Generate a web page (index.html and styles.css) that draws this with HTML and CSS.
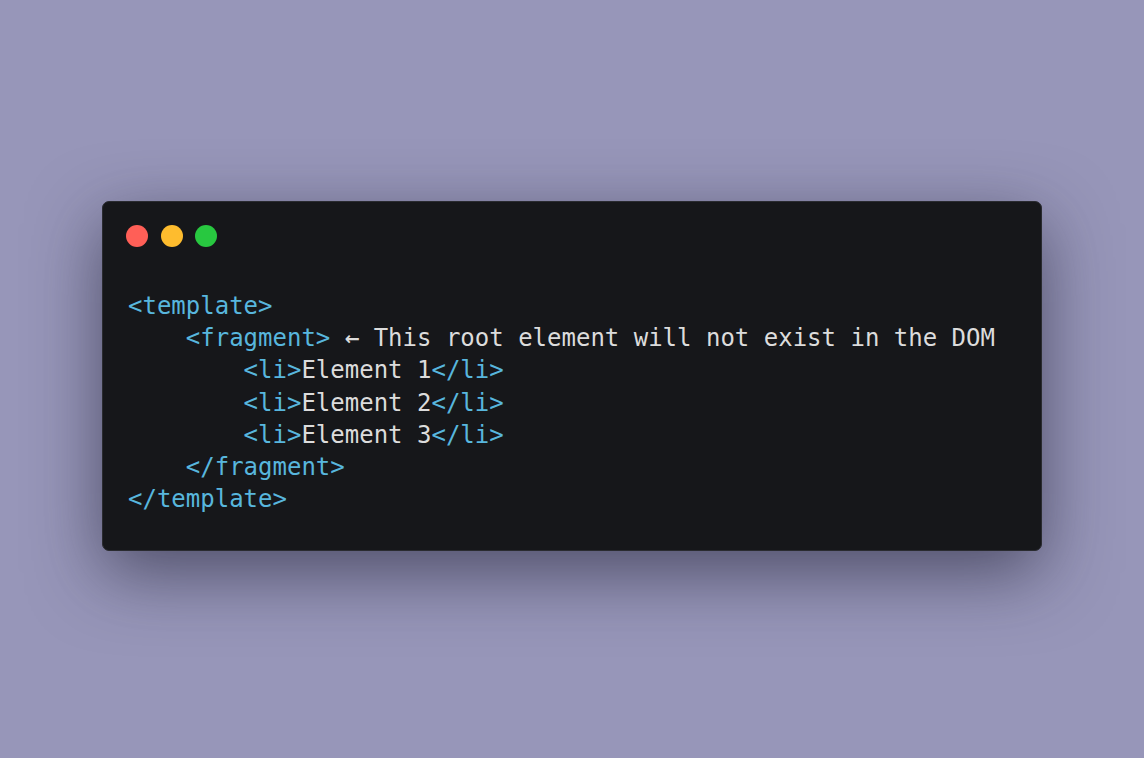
FILE: index.html
```html
<!DOCTYPE html>
<html>
<head>
<meta charset="utf-8">
<link rel="stylesheet" href="styles.css">
</head>
<body>
<div class="window">
  <div class="dots">
    <span class="dot red"></span>
    <span class="dot yellow"></span>
    <span class="dot green"></span>
  </div>
<pre class="code"><span class="tag">&lt;template&gt;</span>
    <span class="tag">&lt;fragment&gt;</span> <span class="arrow">←</span> This root element will not exist in the DOM
        <span class="tag">&lt;li&gt;</span>Element 1<span class="tag">&lt;/li&gt;</span>
        <span class="tag">&lt;li&gt;</span>Element 2<span class="tag">&lt;/li&gt;</span>
        <span class="tag">&lt;li&gt;</span>Element 3<span class="tag">&lt;/li&gt;</span>
    <span class="tag">&lt;/fragment&gt;</span>
<span class="tag">&lt;/template&gt;</span></pre>
</div>
</body>
</html>
```
FILE: styles.css
```css
html, body {
  margin: 0;
  padding: 0;
}
body {
  background: #9796b9;
  height: 758px;
  display: flex;
  align-items: center;
  justify-content: center;
  padding-bottom: 6px;
  box-sizing: border-box;
}
.window {
  width: 940px;
  height: 350px;
  box-sizing: border-box;
  background: #16171a;
  border-radius: 7px;
  border: 1px solid #2a2b30;
  box-shadow: 0 22px 70px rgba(30, 30, 50, 0.6);
  padding: 23px 24px 0 23px;
}
.dots {
  display: flex;
  gap: 12.5px;
  height: 22px;
}
.dot {
  width: 22px;
  height: 22px;
  border-radius: 50%;
}
.red { background: #ff5f57; }
.yellow { background: #febc2e; }
.green { background: #28c840; }
.code {
  margin: 43px 0 0 2px;
  font-family: "DejaVu Sans Mono", monospace;
  font-size: 24px;
  line-height: 32.2px;
  color: #dcdcdc;
  white-space: pre;
}
.tag {
  color: #58b6dd;
}
.arrow {
  display: inline-block;
  width: 14.45px;
  text-align: center;
  font-family: "DejaVu Sans", sans-serif;
  font-weight: bold;
  font-size: 18px;
  line-height: 1;
  vertical-align: 1px;
}
```
